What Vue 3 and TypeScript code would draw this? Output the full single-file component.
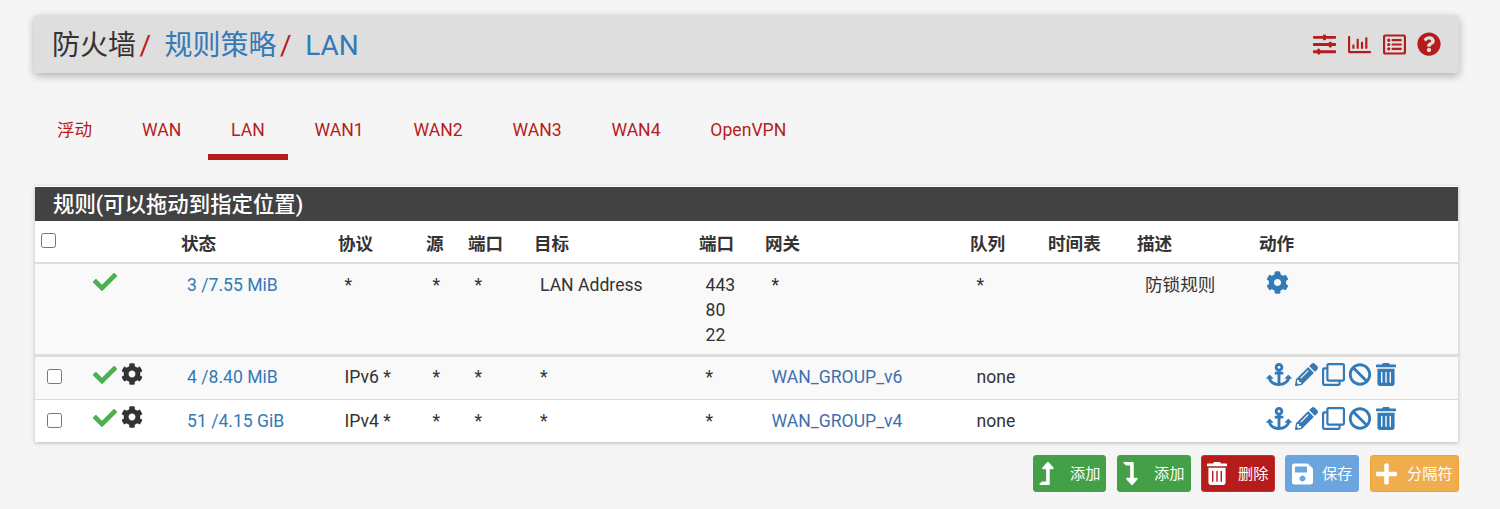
<script setup lang="ts">
import { h } from 'vue'

type IconDef = { vb: string; d: string }

const icons: Record<string, IconDef> = {
  check: { vb: '0 0 512 512', d: 'M173.898 439.404l-166.4-166.4c-9.997-9.997-9.997-26.206 0-36.204l36.203-36.204c9.997-9.998 26.207-9.998 36.204 0L192 312.69 432.095 72.596c9.997-9.997 26.207-9.997 36.204 0l36.203 36.204c9.997 9.997 9.997 26.206 0 36.204l-294.4 294.401c-9.998 9.997-26.207 9.997-36.204-.001z' },
  cog: { vb: '0 0 512 512', d: 'M487.4 315.7l-42.6-24.6c4.3-23.2 4.3-47 0-70.2l42.6-24.6c4.9-2.8 7.1-8.6 5.5-14-11.1-35.6-30-67.8-54.7-94.6-3.8-4.1-10-5.1-14.8-2.3L380.8 110c-17.9-15.4-38.5-27.3-60.8-35.1V25.8c0-5.6-3.9-10.5-9.4-11.7-36.7-8.2-74.3-7.8-109.2 0-5.5 1.2-9.4 6.1-9.4 11.7V75c-22.2 7.9-42.8 19.8-60.8 35.1L88.7 85.5c-4.9-2.8-11-1.9-14.8 2.3-24.7 26.7-43.6 58.9-54.7 94.6-1.7 5.4.6 11.2 5.5 14L67.3 221c-4.3 23.2-4.3 47 0 70.2l-42.6 24.6c-4.9 2.8-7.1 8.6-5.5 14 11.1 35.6 30 67.8 54.7 94.6 3.8 4.1 10 5.1 14.8 2.3l42.6-24.6c17.9 15.4 38.5 27.3 60.8 35.1v49.2c0 5.6 3.9 10.5 9.4 11.7 36.7 8.2 74.3 7.8 109.2 0 5.5-1.2 9.4-6.1 9.4-11.7v-49.2c22.2-7.9 42.8-19.8 60.8-35.1l42.6 24.6c4.9 2.8 11 1.9 14.8-2.3 24.7-26.7 43.6-58.9 54.7-94.6 1.5-5.5-.7-11.3-5.6-14.1zM256 336c-44.1 0-80-35.9-80-80s35.9-80 80-80 80 35.9 80 80-35.9 80-80 80z' },
  anchor: { vb: '0 0 576 512', d: 'M12.971 352h32.394C67.172 454.735 181.944 512 288 512c106.229 0 220.853-57.38 242.635-160h32.394c10.691 0 16.045-12.926 8.485-20.485l-67.029-67.029c-4.686-4.686-12.284-4.686-16.971 0l-67.029 67.029c-7.56 7.56-2.206 20.485 8.485 20.485h35.146c-20.29 54.317-84.963 86.588-144.117 94.015V256h52c6.627 0 12-5.373 12-12v-40c0-6.627-5.373-12-12-12h-52v-5.47c37.281-13.178 63.995-48.725 64-90.518C384.005 43.772 341.605.738 289.37.01 235.723-.739 192 42.525 192 96c0 41.798 26.716 77.35 64 90.53V192h-52c-6.627 0-12 5.373-12 12v40c0 6.627 5.373 12 12 12h52v190.015c-58.936-7.399-123.82-39.679-144.117-94.015h35.146c10.691 0 16.045-12.926 8.485-20.485l-67.029-67.029c-4.686-4.686-12.284-4.686-16.971 0L4.485 331.515C-3.074 339.074 2.28 352 12.971 352zM288 64c17.645 0 32 14.355 32 32s-14.355 32-32 32-32-14.355-32-32 14.355-32 32-32z' },
  pencil: { vb: '0 0 512 512', d: 'M497.9 142.1l-46.1 46.1c-4.7 4.7-12.3 4.7-17 0l-111-111c-4.7-4.7-4.7-12.3 0-17l46.1-46.1c18.7-18.7 49.1-18.7 67.9 0l60.1 60.1c18.8 18.7 18.8 49.1 0 67.9zM284.2 99.8L21.6 362.4.4 483.9c-2.9 16.4 11.4 30.6 27.8 27.8l121.5-21.3 262.6-262.6c4.7-4.7 4.7-12.3 0-17l-111-111c-4.8-4.7-12.4-4.7-17.1 0zM124.1 339.9c-5.5-5.5-5.5-14.3 0-19.8l154-154c5.5-5.5 14.3-5.5 19.8 0s5.5 14.3 0 19.8l-154 154c-5.5 5.5-14.3 5.5-19.8 0zM88 424h48v36.3l-64.5 11.3-31.1-31.1L51.7 376H88v48z' },
  clone: { vb: '0 0 512 512', d: 'M464 0H144c-26.51 0-48 21.49-48 48v48H48c-26.51 0-48 21.49-48 48v320c0 26.51 21.49 48 48 48h320c26.51 0 48-21.49 48-48v-48h48c26.51 0 48-21.49 48-48V48c0-26.51-21.49-48-48-48zM362 464H54a6 6 0 0 1-6-6V150a6 6 0 0 1 6-6h42v224c0 26.51 21.49 48 48 48h224v42a6 6 0 0 1-6 6zm96-96H150a6 6 0 0 1-6-6V54a6 6 0 0 1 6-6h308a6 6 0 0 1 6 6v308a6 6 0 0 1-6 6z' },
  ban: { vb: '0 0 512 512', d: 'M256 8C119.034 8 8 119.033 8 256s111.034 248 248 248 248-111.034 248-248S392.967 8 256 8zm130.108 117.892c65.448 65.448 70 165.481 20.677 235.637L150.47 105.216c70.204-49.356 170.226-44.735 235.638 20.676zM125.892 386.108c-65.448-65.448-70-165.481-20.677-235.637L361.53 406.784c-70.203 49.356-170.226 44.736-235.638-20.676z' },
  trash: { vb: '0 0 448 512', d: 'M32 464a48 48 0 0 0 48 48h288a48 48 0 0 0 48-48V128H32zm272-256a16 16 0 0 1 32 0v224a16 16 0 0 1-32 0zm-96 0a16 16 0 0 1 32 0v224a16 16 0 0 1-32 0zm-96 0a16 16 0 0 1 32 0v224a16 16 0 0 1-32 0zM432 32H312l-9.4-18.7A24 24 0 0 0 281.1 0H166.8a23.72 23.72 0 0 0-21.4 13.3L136 32H16A16 16 0 0 0 0 48v32a16 16 0 0 0 16 16h416a16 16 0 0 0 16-16V48a16 16 0 0 0-16-16z' },
  question: { vb: '0 0 512 512', d: 'M504 256c0 136.997-111.043 248-248 248S8 392.997 8 256C8 119.083 119.043 8 256 8s248 111.083 248 248zM262.655 90c-54.497 0-89.255 22.957-116.549 63.758-3.536 5.286-2.353 12.415 2.715 16.258l34.699 26.31c5.205 3.947 12.621 3.008 16.665-2.122 17.864-22.658 30.113-35.797 57.303-35.797 20.429 0 45.698 13.148 45.698 32.958 0 14.976-12.363 22.667-32.534 33.976C247.128 238.528 216 254.941 216 296v4c0 6.627 5.373 12 12 12h56c6.627 0 12-5.373 12-12v-1.333c0-28.462 83.186-29.647 83.186-106.667 0-58.002-60.165-102-116.531-102zM256 338c-25.365 0-46 20.635-46 46 0 25.364 20.635 46 46 46s46-20.636 46-46c0-25.365-20.635-46-46-46z' },
  sliders: { vb: '0 0 512 512', d: 'M496 384H160v-16c0-8.8-7.2-16-16-16h-32c-8.8 0-16 7.2-16 16v16H16c-8.8 0-16 7.2-16 16v32c0 8.8 7.2 16 16 16h80v16c0 8.8 7.2 16 16 16h32c8.8 0 16-7.2 16-16v-16h336c8.8 0 16-7.2 16-16v-32c0-8.8-7.2-16-16-16zm0-160h-80v-16c0-8.8-7.2-16-16-16h-32c-8.8 0-16 7.2-16 16v16H16c-8.8 0-16 7.2-16 16v32c0 8.8 7.2 16 16 16h336v16c0 8.8 7.2 16 16 16h32c8.8 0 16-7.2 16-16v-16h80c8.8 0 16-7.2 16-16v-32c0-8.8-7.2-16-16-16zm0-160H288V48c0-8.8-7.2-16-16-16h-32c-8.8 0-16 7.2-16 16v16H16C7.2 64 0 71.2 0 80v32c0 8.8 7.2 16 16 16h208v16c0 8.8 7.2 16 16 16h32c8.8 0 16-7.2 16-16v-16h208c8.8 0 16-7.2 16-16V80c0-8.8-7.2-16-16-16z' },
  chart: { vb: '0 0 512 512', d: 'M396.8 352h22.4c6.4 0 12.8-6.4 12.8-12.8V108.8c0-6.4-6.4-12.8-12.8-12.8h-22.4c-6.4 0-12.8 6.4-12.8 12.8v230.4c0 6.4 6.4 12.8 12.8 12.8zm-192 0h22.4c6.4 0 12.8-6.4 12.8-12.8V140.8c0-6.4-6.4-12.8-12.8-12.8h-22.4c-6.4 0-12.8 6.4-12.8 12.8v198.4c0 6.4 6.4 12.8 12.8 12.8zm96 0h22.4c6.4 0 12.8-6.4 12.8-12.8V204.8c0-6.4-6.4-12.8-12.8-12.8h-22.4c-6.4 0-12.8 6.4-12.8 12.8v134.4c0 6.4 6.4 12.8 12.8 12.8zM496 400H48V80c0-8.84-7.16-16-16-16H16C7.16 64 0 71.16 0 80v336c0 17.67 14.33 32 32 32h464c8.84 0 16-7.16 16-16v-16c0-8.84-7.16-16-16-16zm-387.2-48h22.4c6.4 0 12.8-6.4 12.8-12.8v-70.4c0-6.4-6.4-12.8-12.8-12.8h-22.4c-6.4 0-12.8 6.4-12.8 12.8v70.4c0 6.4 6.4 12.8 12.8 12.8z' },
  list: { vb: '0 0 512 512', d: 'M464 32H48C21.49 32 0 53.49 0 80v352c0 26.51 21.49 48 48 48h416c26.51 0 48-21.49 48-48V80c0-26.51-21.49-48-48-48zm-6 400H54a6 6 0 0 1-6-6V86a6 6 0 0 1 6-6h404a6 6 0 0 1 6 6v340a6 6 0 0 1-6 6zm-42-92v24c0 6.627-5.373 12-12 12H204c-6.627 0-12-5.373-12-12v-24c0-6.627 5.373-12 12-12h200c6.627 0 12 5.373 12 12zm0-96v24c0 6.627-5.373 12-12 12H204c-6.627 0-12-5.373-12-12v-24c0-6.627 5.373-12 12-12h200c6.627 0 12 5.373 12 12zm0-96v24c0 6.627-5.373 12-12 12H204c-6.627 0-12-5.373-12-12v-24c0-6.627 5.373-12 12-12h200c6.627 0 12 5.373 12 12zm-252 12c0 19.882-16.118 36-36 36s-36-16.118-36-36 16.118-36 36-36 36 16.118 36 36zm0 96c0 19.882-16.118 36-36 36s-36-16.118-36-36 16.118-36 36-36 36 16.118 36 36zm0 96c0 19.882-16.118 36-36 36s-36-16.118-36-36 16.118-36 36-36 36 16.118 36 36z' },
  save: { vb: '0 0 448 512', d: 'M433.941 129.941l-83.882-83.882A48 48 0 0 0 316.118 32H48C21.49 32 0 53.49 0 80v352c0 26.51 21.49 48 48 48h352c26.51 0 48-21.49 48-48V163.882a48 48 0 0 0-14.059-33.941zM224 416c-35.346 0-64-28.654-64-64 0-35.346 28.654-64 64-64s64 28.654 64 64c0 35.346-28.654 64-64 64zm96-304.52V212c0 6.627-5.373 12-12 12H76c-6.627 0-12-5.373-12-12V108c0-6.627 5.373-12 12-12h228.52c3.183 0 6.235 1.264 8.485 3.515l3.48 3.48A11.996 11.996 0 0 1 320 111.48z' },
  plus: { vb: '0 0 448 512', d: 'M416 208H272V64c0-17.67-14.33-32-32-32h-32c-17.67 0-32 14.33-32 32v144H32c-17.67 0-32 14.33-32 32v32c0 17.67 14.33 32 32 32h144v144c0 17.67 14.33 32 32 32h32c17.67 0 32-14.33 32-32V304h144c17.67 0 32-14.33 32-32v-32c0-17.67-14.33-32-32-32z' },
  up: { vb: '0 0 320 512', d: 'M313.553 119.669L209.587 7.666c-9.485-10.214-25.676-10.229-35.174 0L70.438 119.669C56.232 134.969 67.062 160 88.025 160H152v272H68.024a11.996 11.996 0 0 0-8.485 3.515l-56 56C-4.021 499.074 1.333 512 12.024 512H208c13.255 0 24-10.745 24-24V160h63.966c20.878 0 31.851-24.969 17.587-40.331z' },
  down: { vb: '0 0 320 512', d: 'M313.553 392.331L209.587 504.334c-9.485 10.214-25.676 10.229-35.174 0L70.438 392.331C56.232 377.031 67.062 352 88.025 352H152V80H68.024a11.996 11.996 0 0 1-8.485-3.515l-56-56C-4.021 12.926 1.333 0 12.024 0H208c13.255 0 24 10.745 24 24v328h63.966c20.878 0 31.851 24.969 17.587 40.331z' },
}

const Icon = (props: { name: string }) => {
  const icon = icons[props.name]
  return h('svg', { viewBox: icon.vb, fill: 'currentColor', 'aria-hidden': 'true' }, [h('path', { d: icon.d })])
}
Icon.props = ['name']

const tabs = ['浮动', 'WAN', 'LAN', 'WAN1', 'WAN2', 'WAN3', 'WAN4', 'OpenVPN']
const colWidths = [52, 88, 157, 88, 42, 66, 165, 66, 205, 78, 89, 122, 205]
const heads = ['', '', '状态', '协议', '源', '端口', '目标', '端口', '网关', '队列', '时间表', '描述', '动作']
const rules = [
  { states: '4 /8.40 MiB', proto: 'IPv6 *', gateway: 'WAN_GROUP_v6' },
  { states: '51 /4.15 GiB', proto: 'IPv4 *', gateway: 'WAN_GROUP_v4' },
]
const actions = [
  { key: 'anchor', cls: 'a-anchor' },
  { key: 'pencil', cls: 'a-pencil' },
  { key: 'clone', cls: 'a-clone' },
  { key: 'ban', cls: 'a-ban' },
  { key: 'trash', cls: 'a-trash' },
]
const buttons = [
  { icon: 'up', label: '添加', cls: 'green b-add' },
  { icon: 'down', label: '添加', cls: 'green b-add2' },
  { icon: 'trash', label: '删除', cls: 'red b-del' },
  { icon: 'save', label: '保存', cls: 'blue b-save' },
  { icon: 'plus', label: '分隔符', cls: 'orange b-sep' },
]
</script>

<template>
  <div class="page">
    <header class="bar">
      <h1 class="crumbs">
        <span>防火墙</span><i class="sep">/</i><a class="link">规则策略</a><i class="sep">/</i><a class="link">LAN</a>
      </h1>
      <div class="bar-icons">
        <Icon name="sliders" class="bi" />
        <Icon name="chart" class="bi" />
        <Icon name="list" class="bi" />
        <Icon name="question" class="bi bi-q" />
      </div>
    </header>

    <nav class="tabs">
      <a v-for="t in tabs" :key="t" class="tab" :class="{ active: t === 'LAN' }">{{ t }}</a>
    </nav>

    <section class="panel">
      <h2 class="panel-title">规则(可以拖动到指定位置)</h2>
      <table class="rules">
        <colgroup>
          <col v-for="(w, i) in colWidths" :key="i" :style="{ width: w + 'px' }" />
        </colgroup>
        <thead>
          <tr>
            <th class="cb-head"><input type="checkbox" class="cb" /></th>
            <th v-for="(t, i) in heads.slice(1)" :key="i">{{ t }}</th>
          </tr>
        </thead>
        <tbody>
          <tr class="sys">
            <td></td>
            <td class="st"><div class="st-icons"><Icon name="check" class="ok" /></div></td>
            <td class="num"><a class="link">3 /7.55 MiB</a></td>
            <td>*</td>
            <td>*</td>
            <td>*</td>
            <td class="num">LAN Address</td>
            <td>443<br />80<br />22</td>
            <td>*</td>
            <td>*</td>
            <td></td>
            <td class="desc">防锁规则</td>
            <td class="acts"><div class="act-row"><Icon name="cog" class="act gear" /></div></td>
          </tr>
          <tr v-for="r in rules" :key="r.states" class="rule">
            <td class="cb-cell"><input type="checkbox" class="cb" /></td>
            <td class="st">
              <div class="st-icons"><Icon name="check" class="ok" /><Icon name="cog" class="adv" /></div>
            </td>
            <td class="num"><a class="link">{{ r.states }}</a></td>
            <td>{{ r.proto }}</td>
            <td>*</td>
            <td>*</td>
            <td class="num">*</td>
            <td>*</td>
            <td><a class="link gw">{{ r.gateway }}</a></td>
            <td>none</td>
            <td></td>
            <td></td>
            <td class="acts">
              <div class="act-row">
                <Icon v-for="a in actions" :key="a.key" :name="a.key" class="act" :class="a.cls" />
              </div>
            </td>
          </tr>
        </tbody>
      </table>
    </section>

    <div class="buttons">
      <button v-for="b in buttons" :key="b.cls" type="button" class="btn" :class="b.cls">
        <Icon :name="b.icon" class="btn-icon" />
        <span>{{ b.label }}</span>
      </button>
    </div>
  </div>
</template>

<style>
html, body { margin: 0; background: #f5f5f5; }
</style>

<style scoped>
.page {
  box-sizing: border-box;
  width: 1500px;
  height: 509px;
  overflow: hidden;
  padding: 15px 41px 0 34px;
  font-family: Roboto, "Noto Sans CJK SC", sans-serif;
  color: #333;
  background: #f5f5f5;
}
.bar {
  display: flex;
  align-items: center;
  justify-content: space-between;
  height: 58px;
  padding: 0 18px;
  background: #dedede;
  border-radius: 3px;
  box-shadow: 0 3px 8px rgba(0, 0, 0, 0.28);
}
.crumbs {
  margin: 0;
  padding-top: 3px;
  font-size: 28px;
  font-weight: 400;
  line-height: 34px;
  color: #333;
  white-space: nowrap;
}
.sep {
  font-style: normal;
  color: #b71c1c;
  margin: 0 13.5px 0 3.5px;
}
.link {
  color: #337ab7;
}
.bar-icons {
  display: flex;
  align-items: center;
  gap: 12px;
  color: #b71c1c;
}
.bi {
  width: 23px;
  height: 23px;
  display: block;
}
.bi-q {
  width: 24px;
  height: 24px;
  margin-left: -1px;
}
.tabs {
  display: flex;
  gap: 2.8px;
  margin: 32px 0 0 -0.5px;
  height: 55px;
}
.tab {
  box-sizing: border-box;
  height: 55px;
  padding: 13px 23.5px 0;
  font-size: 17.6px;
  line-height: 25px;
  color: #b71c1c;
  border-bottom: 6px solid transparent;
}
.tab.active {
  border-bottom-color: #b71c1c;
}
.panel {
  margin: 26px 1px 0;
  background: #fff;
  padding-top: 1px;
  box-shadow: 0 1px 4px rgba(0, 0, 0, 0.25);
}
.panel-title {
  margin: 0;
  height: 34px;
  padding-left: 18px;
  font-size: 21.4px;
  font-weight: 500;
  line-height: 35px;
  color: #fff;
  background: #424242;
  white-space: nowrap;
}
.rules {
  width: 1423px;
  table-layout: fixed;
  border-collapse: collapse;
  font-size: 17.6px;
  line-height: 25px;
}
th {
  height: 42px;
  box-sizing: border-box;
  padding: 6px 0 0 6px;
  text-align: left;
  font-weight: 700;
  color: #333;
  border-bottom: 2px solid #ddd;
}
td {
  padding: 9px 0 6px 12.5px;
  vertical-align: top;
  color: #333;
  white-space: nowrap;
}
td.num {
  padding-left: 12px;
}
.sys td {
  background: #f9f9f9;
  border-bottom: 3px solid #ddd;
}
.rule td {
  padding-top: 8px;
  padding-bottom: 9px;
  background: #f9f9f9;
  border-bottom: 1px solid #ddd;
}
.rule:last-child td {
  padding-top: 9px;
  padding-bottom: 8px;
  background: #fff;
  border-bottom: 0;
}
.cb {
  display: block;
  width: 15px;
  height: 15px;
  margin: 0;
}
.cb-head {
  padding-top: 0;
  padding-bottom: 2px;
}
.rule td.cb-cell {
  padding: 12px 0 0 12px;
}
.rule:last-child td.cb-cell {
  padding-top: 13px;
}
.rule td.st,
.sys td.st {
  padding: 6px 0 0 6px;
}
.st-icons {
  display: flex;
  align-items: flex-start;
  gap: 4px;
}
.ok {
  width: 24px;
  height: 24px;
  color: #4caf50;
  display: block;
}
.adv {
  width: 22px;
  height: 22px;
  color: #333;
  display: block;
}
.gw {
  color: #3f6fb0;
}
td.desc {
  padding-left: 14px;
}
.sys td.acts,
.rule td.acts {
  padding: 6px 0 0 13px;
}
.rule:last-child td.acts {
  padding-top: 7px;
}
.act-row {
  display: flex;
  align-items: flex-start;
}
.act {
  display: block;
  height: 23px;
  color: #337ab7;
}
.gear { width: 23px; margin-top: 1px; }
.a-anchor { width: 26px; margin-right: 3px; }
.a-pencil { width: 23px; margin-right: 4px; }
.a-clone { width: 23px; margin-right: 3px; }
.a-ban { width: 24px; margin-right: 4px; }
.a-trash { width: 20px; }
.buttons {
  display: flex;
  justify-content: flex-end;
  gap: 10px;
  margin-top: 13px;
}
.btn {
  display: flex;
  align-items: center;
  box-sizing: border-box;
  height: 37px;
  padding: 0 5px;
  border: 1px solid;
  border-radius: 3px;
  color: #fff;
  font-family: inherit;
  font-size: 15.2px;
}
.btn-icon {
  display: block;
  height: 23px;
  flex: none;
}
.btn span {
  white-space: nowrap;
  padding-bottom: 3px;
}
.green { background: #43a047; border-color: #43a047; }
.red { background: #b71c1c; border-color: #c9302c; }
.blue { background: #6ba5e0; border-color: #6ba5e0; }
.orange { background: #f0ad4e; border-color: #eea236; }
.b-add { width: 73px; margin-right: 1px; }
.b-add2 { width: 74px; }
.b-del { width: 74px; }
.b-save { width: 74px; margin-right: 1px; }
.b-sep { width: 89px; }
.b-add .btn-icon, .b-add2 .btn-icon { width: 15px; margin-right: 16px; }
.b-del .btn-icon { width: 20px; margin-right: 11px; }
.b-save .btn-icon { width: 21px; height: 24px; margin: 0 9px 0 1px; }
.b-sep .btn-icon { width: 21px; height: 24px; margin-right: 10px; }
</style>
